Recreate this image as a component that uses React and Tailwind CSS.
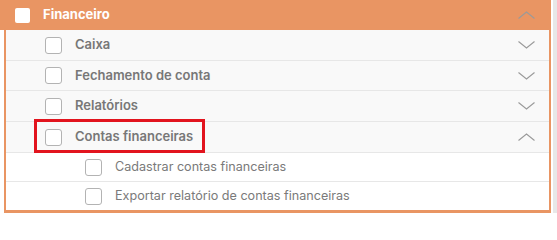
import React from "react";

function Chevron({ up }) {
  return (
    <svg width="17" height="8" viewBox="0 0 17 8" className="shrink-0">
      {up ? (
        <polyline points="0.5,7.5 8.5,1 16.5,7.5" fill="none" stroke="#9a9a9a" strokeWidth="1.1" />
      ) : (
        <polyline points="0.5,0.5 8.5,7 16.5,0.5" fill="none" stroke="#9a9a9a" strokeWidth="1.1" />
      )}
    </svg>
  );
}

function Box() {
  return <div className="w-[17px] h-[17px] shrink-0 rounded-[3px] border border-[#b3b3b3] bg-white" />;
}

function Row({ label, up, h, children }) {
  return (
    <div className={`relative flex items-center ${h} border-b border-[#e7e7e7] bg-[#f9f9f9] pl-[39px] pr-[14px]`}>
      <Box />
      <span className="ml-[13px] flex-1 text-[13px] font-semibold text-[#777777]">{label}</span>
      <Chevron up={up} />
      {children}
    </div>
  );
}

function SubRow({ label, last }) {
  return (
    <div className={`flex items-center bg-white pl-[79px] ${last ? "h-[28px]" : "h-[29px] border-b border-[#e7e7e7]"}`}>
      <Box />
      <span className="ml-[13px] text-[12.6px] text-[#7a7a7a]">{label}</span>
    </div>
  );
}

export default function App() {
  return (
    <div className="flex w-[557px] h-[213px] bg-white overflow-hidden" style={{ fontFamily: "Inter, 'Noto Sans', sans-serif" }}>
      <div className="w-[551px] flex flex-col">
        <div className="flex items-center h-[30px] shrink-0 bg-[#e99563] pl-[15px] pr-[16px]">
          <div className="w-[15px] h-[15px] rounded-[2px] bg-white" />
          <span className="ml-[13px] flex-1 text-[13px] font-bold text-white">Financeiro</span>
          <Chevron up />
        </div>
        <div className="ml-[4px] flex-1 flex flex-col border-l-2 border-r-2 border-b-[3px] border-[#e99563]">
          <Row label="Caixa" h="h-[31px]" />
          <Row label="Fechamento de conta" h="h-[30px]" />
          <Row label="Relatórios" h="h-[31px]" />
          <Row label="Contas financeiras" up h="h-[31px]">
            <div className="absolute left-[28px] top-[-3px] w-[171px] h-[34px] border-[3px] border-[#e2141e]" />
          </Row>
          <SubRow label="Cadastrar contas financeiras" />
          <SubRow label="Exportar relatório de contas financeiras" last />
        </div>
      </div>
      <div className="ml-[2px] w-[4px] bg-[#e8e8e8]" />
    </div>
  );
}
